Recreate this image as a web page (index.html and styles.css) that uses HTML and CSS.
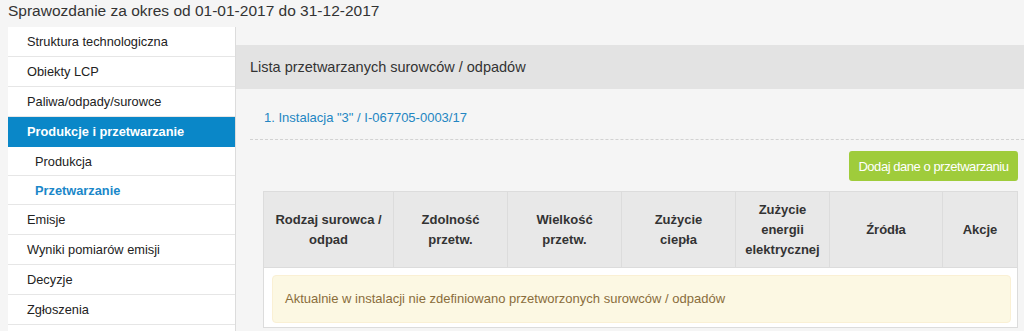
FILE: index.html
```html
<!DOCTYPE html>
<html lang="pl">
<head>
<meta charset="utf-8">
<title>Sprawozdanie</title>
<link rel="stylesheet" href="styles.css">
</head>
<body>
<div class="page-title">Sprawozdanie za okres od 01-01-2017 do 31-12-2017</div>
<div class="layout">
  <nav class="sidebar">
    <a class="nav-item">Struktura technologiczna</a>
    <a class="nav-item">Obiekty LCP</a>
    <a class="nav-item">Paliwa/odpady/surowce</a>
    <a class="nav-item active">Produkcje i przetwarzanie</a>
    <a class="nav-item sub">Produkcja</a>
    <a class="nav-item sub current">Przetwarzanie</a>
    <a class="nav-item">Emisje</a>
    <a class="nav-item">Wyniki pomiarów emisji</a>
    <a class="nav-item">Decyzje</a>
    <a class="nav-item">Zgłoszenia</a>
  </nav>
  <main class="main">
    <div class="panel-heading">Lista przetwarzanych surowców / odpadów</div>
    <div class="panel-body">
      <div class="install-link"><a>1. Instalacja "3" / I-067705-0003/17</a></div>
      <div class="divider"></div>
      <div class="actions"><button class="btn-add">Dodaj dane o przetwarzaniu</button></div>
      <table class="data-table">
        <colgroup>
          <col style="width:130px"><col style="width:114px"><col style="width:114px"><col style="width:114px"><col style="width:94px"><col style="width:113px"><col>
        </colgroup>
        <thead>
          <tr>
            <th>Rodzaj surowca /<br>odpad</th>
            <th>Zdolność<br>przetw.</th>
            <th>Wielkość<br>przetw.</th>
            <th>Zużycie<br>ciepła</th>
            <th>Zużycie<br>energii<br>elektrycznej</th>
            <th>Źródła</th>
            <th>Akcje</th>
          </tr>
        </thead>
        <tbody>
          <tr>
            <td colspan="7"><div class="alert">Aktualnie w instalacji nie zdefiniowano przetworzonych surowców / odpadów</div></td>
          </tr>
        </tbody>
      </table>
    </div>
  </main>
</div>
</body>
</html>
```

FILE: styles.css
```css
* { box-sizing: border-box; }
html, body {
  margin: 0;
  padding: 0;
  background: #f5f5f5;
  font-family: "Liberation Sans", Arial, sans-serif;
  color: #333;
}
.page-title {
  height: 27px;
  padding: 1px 8px 0;
  font-size: 15.5px;
  line-height: 20px;
  color: #333;
}
.layout {
  display: flex;
  align-items: stretch;
  min-height: 304px;
}
.sidebar {
  width: 228px;
  margin-left: 8px;
  background: #fff;
  border-right: 1px solid #dcdcdc;
  display: flex;
  flex-direction: column;
}
.nav-item {
  display: block;
  height: 30px;
  padding: 7px 0 0 19px;
  font-size: 12.8px;
  line-height: 15px;
  color: #222;
  border-bottom: 1px solid #e6e6e6;
}
.nav-item.active {
  background: #0a87c8;
  color: #fff;
  font-weight: bold;
  border-bottom-color: #0a87c8;
}
.nav-item.sub {
  height: 29px;
  padding-left: 27px;
}
.nav-item.current {
  color: #1a87c9;
  font-weight: bold;
}
.main {
  flex: 1;
  padding-top: 18px;
  background: #f5f5f5;
}
.panel-heading {
  height: 44px;
  padding: 12px 14px;
  background: #e3e3e3;
  font-size: 14.5px;
  line-height: 20px;
  color: #333;
}
.panel-body {
  padding-left: 14px;
}
.install-link {
  padding: 19px 0 0 14px;
  height: 50px;
  font-size: 13px;
  line-height: 20px;
}
.install-link a {
  color: #2386c2;
}
.divider {
  border-top: 1px dashed #d2d2d2;
}
.actions {
  display: flex;
  justify-content: flex-end;
  padding: 11px 6px 10px 0;
}
.btn-add {
  width: 169px;
  height: 30px;
  border: none;
  border-radius: 3px;
  background: #9fcc3b;
  color: #fff;
  font-family: "Liberation Sans", Arial, sans-serif;
  font-size: 13px;
  letter-spacing: -0.45px;
  white-space: nowrap;
  padding: 0;
}
.data-table {
  margin-left: 13px;
  width: 755px;
  border-collapse: collapse;
  table-layout: fixed;
  background: #fff;
  border: 1px solid #dcdcdc;
}
.data-table th {
  background: #e8e8e8;
  border: 1px solid #dcdcdc;
  font-size: 13px;
  line-height: 20px;
  font-weight: bold;
  color: #333;
  text-align: center;
  vertical-align: middle;
  height: 76px;
  padding: 4px 6px;
}
.data-table td {
  padding: 7px 6px 4px 8px;
}
.alert {
  background: #fcf8e3;
  border: 1px solid #faf0d4;
  border-radius: 4px;
  padding: 13px 12px;
  font-size: 13px;
  line-height: 20px;
  color: #8a6d3b;
}
```
